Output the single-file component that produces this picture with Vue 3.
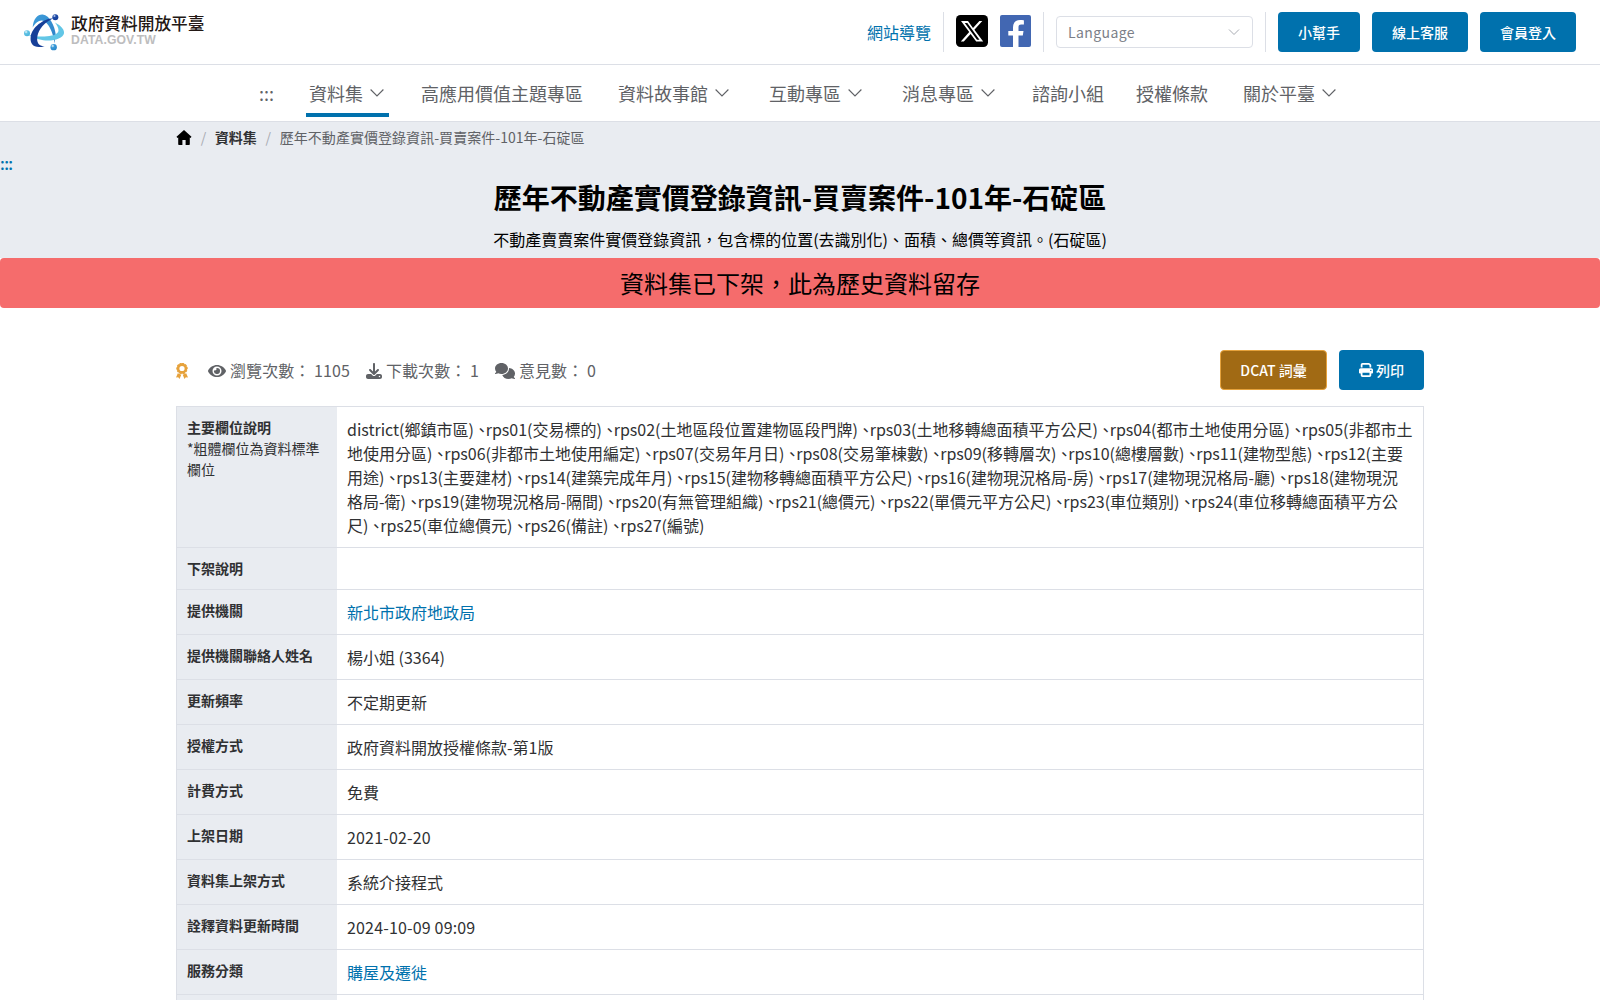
<template>
  <div class="page">
    <header class="topbar">
      <a class="logo" href="#">
        <svg class="logo-mark" viewBox="0 0 120 110">
          <defs>
            <linearGradient id="arcTop" x1="0" y1="0" x2="1" y2="1">
              <stop offset="0" stop-color="#3f9edb" />
              <stop offset="1" stop-color="#2b7fc6" />
            </linearGradient>
            <radialGradient id="ballDark" cx=".35" cy=".3" r=".7">
              <stop offset="0" stop-color="#e8f0fb" />
              <stop offset=".35" stop-color="#1c4aa8" />
              <stop offset="1" stop-color="#173f98" />
            </radialGradient>
            <radialGradient id="ballMid" cx=".35" cy=".3" r=".7">
              <stop offset="0" stop-color="#eef8fd" />
              <stop offset=".4" stop-color="#3a9ad8" />
              <stop offset="1" stop-color="#2b86c9" />
            </radialGradient>
            <radialGradient id="ballLight" cx=".35" cy=".3" r=".7">
              <stop offset="0" stop-color="#f2fbfe" />
              <stop offset=".4" stop-color="#62c3e4" />
              <stop offset="1" stop-color="#4ab4dc" />
            </radialGradient>
          </defs>
          <path d="M26 40C28 12 42 0 56 1C78 4 92 36 95 60L91 88C90 60 72 19 53 19C42 19 33 28 26 40Z" fill="url(#arcTop)" />
          <path d="M93 25C112 35 121 46 120 57C118 73 86 82 58 78C40 75 22 69 11 61C34 68 62 69 83 64C106 58 110 49 93 25Z" fill="#62c6e6" />
          <path d="M88 12C58 14 24 38 20 68C17 92 32 105 62 96C46 97 37 87 40 67C44 43 62 25 88 12Z" fill="#173f98" />
          <circle cx="94" cy="9" r="9" fill="url(#ballDark)" />
          <circle cx="9" cy="57" r="9" fill="url(#ballLight)" />
          <circle cx="89" cy="99" r="9.5" fill="url(#ballMid)" />
        </svg>
        <span class="logo-text">
          <span class="logo-name">政府資料開放平臺</span>
          <span class="logo-domain">DATA.GOV.TW</span>
        </span>
      </a>

      <div class="tools">
        <a class="sitemap" href="#">網站導覽</a>
        <div class="socials">
          <a href="#" aria-label="X">
            <svg class="social" viewBox="0 0 32 32">
              <rect width="32" height="32" rx="4.5" fill="#000" />
              <path d="M5 6h7l5 6.900L23.400 6h2.900l-7.900 8.800L27.200 26.600h-7l-5.600-7.700-6.800 7.700H4.800l8.400-9.700zM8.800 7.900l12.200 16.800h2.500L11.300 7.900z" fill="#fff" fill-rule="evenodd" />
            </svg>
          </a>
          <a href="#" aria-label="Facebook">
            <svg class="social" viewBox="0 0 32 32">
              <rect width="31" height="32" rx="2" fill="#4267b2" />
              <path d="M13 32V20.500H8.300V15.900H13v-3.600C13 7.600 15.800 5 20 5c1.500 0 3 .1 3.900.3v4.300h-2.700c-2.200 0-2.700 1.100-2.700 2.600v3.700h5l-.7 4.600h-4.300V32z" fill="#fff" />
            </svg>
          </a>
        </div>
        <div class="select">
          <span>Language</span>
          <svg class="caret" viewBox="0 0 14 14"><path d="M2 4.500l5 5 5-5" /></svg>
        </div>
        <div class="actions">
          <button v-for="label in actions" :key="label" class="btn">{{ label }}</button>
        </div>
      </div>
    </header>

    <nav class="nav">
      <a class="nav-anchor" href="#">:::</a>
      <a
        v-for="item in menu"
        :key="item.label"
        href="#"
        class="nav-item"
        :class="{ 'has-sub': item.sub, active: item.active }"
      >
        {{ item.label }}
        <svg v-if="item.sub" viewBox="0 0 14 14"><path d="M.6 3.500L7 9.900l6.400-6.400" /></svg>
      </a>
    </nav>

    <section class="hero">
      <div class="breadcrumb">
        <svg class="home" viewBox="0 0 14 14">
          <path d="M7 0L14 6.300 13.200 7.500 12.400 7V13.300Q12.400 14 11.700 14H8.500V9.300H5.500V14H2.300Q1.600 14 1.600 13.300V7L.8 7.500 0 6.300Z" />
        </svg>
        <i>/</i>
        <a href="#">資料集</a>
        <i>/</i>
        <span>{{ title }}</span>
      </div>
      <a class="anchor" href="#">:::</a>
      <h1>{{ title }}</h1>
      <p>不動產賣賣案件實價登錄資訊，包含標的位置(去識別化)、面積、總價等資訊。(石碇區)</p>
    </section>
    <div class="alert">資料集已下架，此為歷史資料留存</div>

    <main class="container">
      <div class="meta">
        <svg class="award" viewBox="0 0 12 16">
          <circle cx="6" cy="5.500" r="3.900" />
          <path class="dots" d="M6 .8A4.700 4.700 0 1 1 5.990.8" />
          <path class="ribbon" d="M1.800 10.300L0 14.500l2.200-.2L3.500 16l1.800-4.300zM10.200 10.300L12 14.500l-2.200-.2L8.500 16l-1.800-4.300z" />
        </svg>
        <span class="stat">
          <svg class="eye" viewBox="0 0 576 512"><path d="M572.520 241.400C518.290 135.590 410.930 64 288 64S57.680 135.640 3.480 241.410a32.350 32.350 0 0 0 0 29.190C57.710 376.410 165.070 448 288 448s230.320-71.640 284.520-177.410a32.350 32.350 0 0 0 0-29.190zM288 400a144 144 0 1 1 144-144 143.930 143.930 0 0 1-144 144zm0-240a95.310 95.310 0 0 0-25.310 3.790 47.850 47.850 0 0 1-66.900 66.900A95.780 95.780 0 1 0 288 160z" /></svg>
          瀏覽次數： 1105
        </span>
        <span class="stat">
          <svg class="download" viewBox="0 0 512 512"><path d="M288 32c0-17.700-14.300-32-32-32s-32 14.300-32 32v242.700l-73.400-73.400c-12.500-12.500-32.800-12.500-45.300 0s-12.500 32.800 0 45.300l128 128c12.500 12.500 32.800 12.500 45.300 0l128-128c12.500-12.500 12.500-32.800 0-45.300s-32.800-12.500-45.300 0L288 274.700V32zM64 352c-35.300 0-64 28.700-64 64v32c0 35.300 28.700 64 64 64h384c35.300 0 64-28.700 64-64v-32c0-35.300-28.700-64-64-64H346.500l-45.300 45.300c-25 25-65.500 25-90.500 0L165.500 352H64zm368 56a24 24 0 1 1 0 48 24 24 0 1 1 0-48z" /></svg>
          下載次數： 1
        </span>
        <span class="stat">
          <svg class="comments" viewBox="0 0 640 512"><path d="M208 352c114.900 0 208-78.800 208-176S322.900 0 208 0S0 78.800 0 176c0 38.600 14.700 74.300 39.600 103.400c-3.500 9.400-8.700 17.700-14.200 24.700c-4.800 6.200-9.700 11-13.300 14.300c-1.800 1.600-3.300 2.900-4.300 3.700c-.5.4-.9.7-1.100.8C1 327.200-1.400 334.400.8 340.900S9.100 352 16 352c21.800 0 43.800-5.600 62.100-12.500c9.200-3.500 17.800-7.400 25.300-11.400C134.100 343.300 169.800 352 208 352zM448 176c0 112.300-99.100 196.900-216.500 207C255.800 457.400 336.400 512 432 512c38.200 0 73.900-8.700 104.700-23.900c7.500 4 16 7.900 25.200 11.400c18.300 6.900 40.300 12.500 62.100 12.500c6.900 0 13.100-4.500 15.200-11.100c2.100-6.600-.2-13.800-5.800-17.900c-.2-.2-.6-.4-1.100-.8c-1-.8-2.500-2-4.300-3.700c-3.600-3.300-8.500-8.100-13.300-14.300c-5.500-7-10.700-15.400-14.200-24.700c24.900-29 39.600-64.700 39.600-103.400c0-92.800-84.900-168.900-192.600-175.500c.4 5.100.6 10.300.6 15.500z" /></svg>
          意見數： 0
        </span>
        <div class="meta-actions">
          <button class="btn btn-warning">DCAT 詞彙</button>
          <button class="btn btn-print">
            <svg viewBox="0 0 512 512"><path d="M128 0C92.700 0 64 28.700 64 64v96h64V64h226.700L384 93.300V160h64V93.300c0-17-6.700-33.300-18.700-45.300L400 18.700C388 6.700 371.700 0 354.700 0H128zM384 352v96H128v-96h256zm64 32h32c17.700 0 32-14.300 32-32v-96c0-35.300-28.700-64-64-64H64c-35.300 0-64 28.700-64 64v96c0 17.700 14.300 32 32 32h32v64c0 35.300 28.700 64 64 64h256c35.300 0 64-28.700 64-64v-64zm-16-136a24 24 0 1 1 0 48 24 24 0 1 1 0-48z" /></svg>
            列印
          </button>
        </div>
      </div>

      <div class="table">
        <div v-for="row in rows" :key="row.label" class="row">
          <div class="label">
            <strong>{{ row.label }}</strong>
            <div v-if="row.note">{{ row.note }}</div>
          </div>
          <div class="value" :class="row.type">
            <a v-if="row.link" href="#">{{ row.value }}</a>
            <template v-else>{{ row.value }}</template>
          </div>
        </div>
      </div>
    </main>
  </div>
</template>

<script setup>
const title = '歷年不動產實價登錄資訊-買賣案件-101年-石碇區'

const actions = ['小幫手', '線上客服', '會員登入']

const menu = [
  { label: '資料集', sub: true, active: true },
  { label: '高應用價值主題專區' },
  { label: '資料故事館', sub: true },
  { label: '互動專區', sub: true },
  { label: '消息專區', sub: true },
  { label: '諮詢小組' },
  { label: '授權條款' },
  { label: '關於平臺', sub: true }
]

const fields = [
  'district(鄉鎮市區)', 'rps01(交易標的)', 'rps02(土地區段位置建物區段門牌)',
  'rps03(土地移轉總面積平方公尺)', 'rps04(都市土地使用分區)', 'rps05(非都市土地使用分區)',
  'rps06(非都市土地使用編定)', 'rps07(交易年月日)', 'rps08(交易筆棟數)', 'rps09(移轉層次)',
  'rps10(總樓層數)', 'rps11(建物型態)', 'rps12(主要用途)', 'rps13(主要建材)',
  'rps14(建築完成年月)', 'rps15(建物移轉總面積平方公尺)', 'rps16(建物現況格局-房)',
  'rps17(建物現況格局-廳)', 'rps18(建物現況格局-衛)', 'rps19(建物現況格局-隔間)',
  'rps20(有無管理組織)', 'rps21(總價元)', 'rps22(單價元平方公尺)', 'rps23(車位類別)',
  'rps24(車位移轉總面積平方公尺)', 'rps25(車位總價元)', 'rps26(備註)', 'rps27(編號)'
]

const rows = [
  { label: '主要欄位說明', note: '*粗體欄位為資料標準欄位', value: fields.join(' 、'), type: 'fields' },
  { label: '下架說明', value: '' },
  { label: '提供機關', value: '新北市政府地政局', link: true },
  { label: '提供機關聯絡人姓名', value: '楊小姐 (3364)' },
  { label: '更新頻率', value: '不定期更新' },
  { label: '授權方式', value: '政府資料開放授權條款-第1版' },
  { label: '計費方式', value: '免費' },
  { label: '上架日期', value: '2021-02-20', type: 'date' },
  { label: '資料集上架方式', value: '系統介接程式' },
  { label: '詮釋資料更新時間', value: '2024-10-09 09:09', type: 'date' },
  { label: '服務分類', value: '購屋及遷徙', link: true },
  { label: '', value: '' }
]
</script>

<style>
body { overflow: hidden; }
</style>

<style scoped>
.page {
  height: 1000px; overflow: hidden;
  font-family: "Noto Sans CJK TC", sans-serif;
  font-size: 16px; line-height: 1.5;
  color: #303133; background: #fff;
}
.page * { box-sizing: border-box; }
a { color: #0071ad; text-decoration: none; }

.topbar {
  height: 65px; padding: 0 24px;
  display: flex; align-items: center; justify-content: space-between;
  border-bottom: 1px solid #dcdfe6;
}

.logo { display: flex; align-items: flex-start; height: 38px; gap: 7px; }
.logo-mark { width: 40px; height: 37px; margin-top: 1px; }
.logo-text { display: flex; flex-direction: column; }
.logo-name {
  font-size: 16.700px; font-weight: 500; line-height: 20px; color: #231815;
}
.logo-domain {
  padding-top: 1px; letter-spacing: .1px;
  font-family: "Liberation Sans", sans-serif;
  font-size: 12.200px; font-weight: 700; line-height: 13px; color: #bdbdbe;
}

.tools { display: flex; align-items: center; height: 40px; }
.sitemap { padding-right: 12px; }
.socials {
  display: flex; align-items: center; gap: 12px; height: 40px;
  padding: 0 11px 0 12px;
  border-left: 1px solid #dcdfe6; border-right: 1px solid #dcdfe6;
}
.socials a { display: flex; margin-top: -2px; }
.social { width: 32px; height: 32px; }
.select {
  width: 197px; height: 32px; margin: 0 12px; padding: 0 11px;
  display: flex; align-items: center; justify-content: space-between;
  border: 1px solid #dcdfe6; border-radius: 4px;
  font-size: 14px; letter-spacing: .4px; color: #7c7f88;
}
.caret { width: 14px; height: 14px; fill: none; stroke: #a8abb2; }
.actions {
  display: flex; gap: 12px; padding-left: 12px;
  border-left: 1px solid #dcdfe6;
}

.btn {
  height: 40px; padding: 0 20px;
  font: 500 14px/1 "Noto Sans CJK TC", sans-serif;
  color: #fff; background: #0071ad;
  border: 0; border-radius: 4px;
}
.btn-warning { width: 107px; background: #a16a14; border: 1px solid #e6a23c; padding: 0; }
.btn-print { display: flex; align-items: center; gap: 3px; }
.btn-print svg { width: 14px; height: 14px; fill: #fff; }

.nav {
  height: 57px; display: flex; justify-content: center; gap: 32px;
  border-bottom: 1px solid #dcdfe6; font-size: 18px;
}
.nav a { color: #606266; }
.nav-anchor { line-height: 56px; }
.nav-item { display: flex; align-items: center; height: 52px; padding-top: 4px; }
.nav-item.has-sub { padding-left: 3px; padding-right: 5px; }
.nav-item.active { border-bottom: 4px solid #0071ad; padding-top: 8px; }
.nav-item svg {
  width: 14px; height: 14px; margin-left: 7px;
  fill: none; stroke: #606266; stroke-width: 1.150;
}

.hero { background: #e9ecf1; height: 136px; text-align: center; }
.breadcrumb {
  width: 1248px; height: 30px; margin: 0 auto;
  display: flex; align-items: center;
  font-size: 14px; line-height: 14px; color: #606266;
}
.breadcrumb span { letter-spacing: .040px; }
.breadcrumb i { margin: 0 8.700px; font-style: normal; color: #a8abb2; }
.breadcrumb a { font-weight: 700; color: #303133; }
.home { width: 16px; height: 15px; fill: #000; }
.anchor {
  display: block; height: 24px; line-height: 22px;
  text-align: left; font-weight: 500; letter-spacing: -.6px;
}
.hero h1 {
  margin: 0;
  font-size: 28px; font-weight: 700; line-height: 42px; color: #000;
}
.hero p { margin: 9px 0 0; color: #000; }

.alert {
  height: 50px; border-radius: 4px;
  background: #f56c6c; color: #000;
  font-size: 24px; line-height: 50px; text-align: center;
}

.container { width: 1248px; margin: 42px auto 0; }
.meta { display: flex; align-items: center; height: 40px; margin-bottom: 16px; color: #606266; }
.award { width: 12px; height: 16px; margin: 1px 20px 0 0; fill: none; stroke: #e6a23c; stroke-width: 2.600; }
.award .dots { stroke-width: 2; stroke-dasharray: 2 .950; }
.award .ribbon { fill: #e6a23c; stroke: none; }
.stat { display: flex; align-items: center; gap: 4px; margin-right: 16px; letter-spacing: .080px; }
.stat svg { height: 16px; margin-top: 1px; fill: #606266; }
.eye { width: 18px; }
.download { width: 16px; }
.comments { width: 20px; }
.meta-actions { display: flex; gap: 12px; margin-left: auto; }

.table { border: 1px solid #dcdfe6; border-bottom: 0; }
.row { display: flex; border-bottom: 1px solid #dcdfe6; }
.label {
  width: 160px; flex: none; padding: 10px;
  font-size: 14px; line-height: 21px; background: #e9ecf1;
}
.value { flex: 1; padding: 10px; }
.value.date { letter-spacing: .170px; }
/* half-width enumeration commas between field names */
.value.fields { font-feature-settings: "halt"; word-spacing: .220px; }
</style>
